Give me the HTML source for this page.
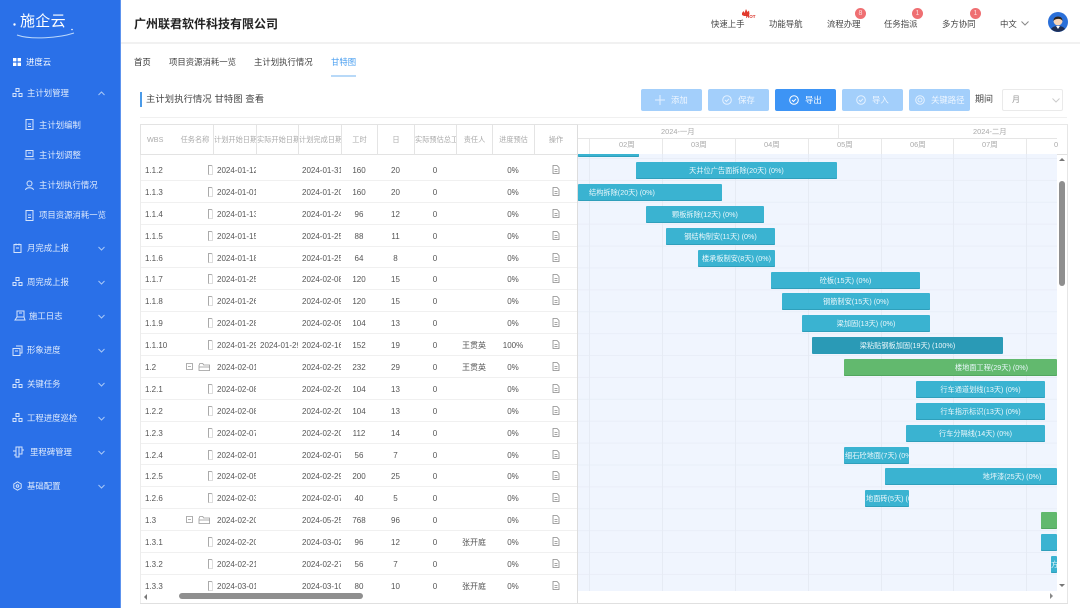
<!DOCTYPE html>
<html lang="zh-CN"><head><meta charset="utf-8"><title>施企云</title>
<style>
*{box-sizing:border-box;margin:0;padding:0}
html,body{width:1080px;height:608px;overflow:hidden;background:#fff}
body{position:relative;font-family:"Liberation Sans","Noto Sans CJK SC",sans-serif;color:#555;filter:blur(.3px)}
.a{position:absolute;white-space:nowrap}
#side{position:absolute;left:0;top:0;width:121px;height:608px;background:#2a70e8;border-right:1px solid #5d93ee}
.m{position:absolute;white-space:nowrap;font-size:8.4px;line-height:12px;color:#e0ebfc;transform:translateY(-6px)}
.ic{position:absolute;fill:none;stroke:#d5e4fb;stroke-width:1}
.ch{position:absolute;left:98px;fill:none;stroke:#a9c8f6;stroke-width:1}
.nav{font-size:8.4px;color:#444;line-height:12px;top:18px}
.bd{position:absolute;width:11px;height:11px;border-radius:50%;background:#ef6f72;top:8px;color:#fbdcdc;font-size:7px;line-height:11px;text-align:center}
.btn{position:absolute;top:89px;height:22px;width:61px;border-radius:2px;background:#a3cffb;color:#eef6ff;font-size:8.4px;line-height:22px;padding-left:30px}
.btn svg{position:absolute;left:14px;top:6px;fill:none;stroke:#e4f1ff;stroke-width:1}
#hd{position:absolute;left:140px;top:124px;width:438px;height:31px;border:1px solid #e3e3e3;border-right:0;background:#fff}
#hd i{position:absolute;top:0;height:30px;border-left:1px solid #e4e4e4}
#hd span{position:absolute;top:10px;font-size:7.2px;line-height:10px;color:#aaa;font-style:normal;white-space:nowrap;overflow:hidden;text-align:center}
#rows{position:absolute;left:140px;top:159px;width:437px;height:432px;overflow:hidden}
.r{display:flex;height:21.9px;line-height:23px;font-size:8px;color:#555;border-bottom:1px solid #f0f0f0;white-space:nowrap}
.r span{display:block;overflow:hidden;flex:none;text-align:center}
.r .w{width:50px;text-align:left;padding-left:5px}
.r .t{width:27px;position:relative;overflow:visible}
.r .d{width:39px;text-align:left}
.r .d2{width:42px;text-align:left;padding-left:4px}
.r .d3{width:43px;text-align:left;padding-left:4px}
.r .h{width:36px}.r .y{width:37px}.r .s{width:42px}.r .p{width:36px}.r .g{width:42px}.r .o{width:43px;position:relative}
.f{position:absolute;left:18px;top:6px;width:5px;height:10px;border:1px solid #aaa;border-right-color:#ddd;border-bottom-color:#ddd;border-top-right-radius:2px}
.e{position:absolute;left:18px;top:6px;fill:none;stroke:#888;stroke-width:.8}
#gw{position:absolute;left:577px;top:124px;width:491px;height:480px;border:1px solid #e6e6e6;border-left:1px solid #ddd;border-top-color:#e8e8e8}
#chart{position:absolute;left:578px;top:154px;width:479px;height:437px;overflow:hidden;background-color:#f0f5fe;background-image:linear-gradient(to bottom,transparent 21px,#e9eef8 21px);background-size:100% 21.9px;background-position:0 5px}
#chart i{position:absolute;top:0;height:437px;border-left:1px solid #e6ebf4}
.b{position:absolute;height:17px;background:#3ab3d1;border-radius:1px;color:#eaf7fb;font-size:7.2px;line-height:17px;text-align:center;overflow:hidden;white-space:nowrap;box-shadow:inset 0 -1px 0 #2f9fbb}
.gn{background:#62b96e;box-shadow:inset 0 -1px 0 #52a65f}
.dk{background:#2a9ab6;box-shadow:none}
.wk{position:absolute;top:140px;font-size:7.4px;color:#aaa;line-height:10px}
.vl{position:absolute;width:1px;background:#e8e8e8}
</style></head><body>
<div id="side">
<svg class="a" style="left:10px;top:10px" width="66" height="30" viewBox="0 0 66 30"><circle cx="4.5" cy="14.5" r="1.2" fill="#fff"/><path d="M7 25c14 5 42 3 57-2" fill="none" stroke="#bcd8fb" stroke-width="1"/><circle cx="62" cy="19.5" r=".8" fill="#fff"/></svg>
<div class="a" style="left:20px;top:12px;font-size:15px;line-height:20px;color:#fff;letter-spacing:.3px">施企云</div>
<svg class="ic" style="left:13px;top:58px;fill:#fff;stroke:none" width="8" height="8"><rect width="3.4" height="3.4"/><rect x="4.6" width="3.4" height="3.4"/><rect y="4.6" width="3.4" height="3.4"/><rect x="4.6" y="4.6" width="3.4" height="3.4"/></svg>
<div class="m" style="left:26px;top:62px;color:#fff">进度云</div>
<svg class="ic" style="left:12px;top:88px" width="11" height="10"><path d="M4 .5h3v3H4zM1 5.5h3v3H1zM7 5.5h3v3H7z"/></svg>
<div class="m" style="left:27px;top:93px">主计划管理</div>
<svg class="ch" style="top:91px" width="7" height="5"><path d="M.5 4 3.5 1l3 3"/></svg>
<svg class="ic" style="left:25px;top:119px" width="9" height="11"><path d="M1 .5h7v10H1zM3 5h3M3 7.500h3"/></svg>
<div class="m" style="left:39px;top:124.500px">主计划编制</div>
<svg class="ic" style="left:24px;top:150px" width="11" height="10"><path d="M2 .5h7v6H2zM.5 9h10M4 3h3"/></svg>
<div class="m" style="left:39px;top:155px">主计划调整</div>
<svg class="ic" style="left:25px;top:180px" width="9" height="11"><circle cx="4.500" cy="3.500" r="2.500"/><path d="M.5 10c.5-3 7.500-3 8 0"/></svg>
<div class="m" style="left:39px;top:185px">主计划执行情况</div>
<svg class="ic" style="left:25px;top:210px" width="9" height="11"><path d="M1 .5h7v10H1zM3 5h3M3 7.500h3"/></svg>
<div class="m" style="left:39px;top:215px">项目资源消耗一览</div>
<svg class="ic" style="left:13px;top:243px" width="9" height="10"><path d="M1 1.500h7v8H1zM3 .5v2M6 .5v2M3 5h3"/></svg>
<div class="m" style="left:27px;top:248px">月完成上报</div>
<svg class="ch" style="top:246px" width="7" height="5"><path d="M.5 1l3 3 3-3"/></svg>
<svg class="ic" style="left:12px;top:277px" width="11" height="10"><path d="M4 .5h3v3H4zM1 5.500h3v3H1zM7 5.500h3v3H7z"/></svg>
<div class="m" style="left:27px;top:282px">周完成上报</div>
<svg class="ch" style="top:280px" width="7" height="5"><path d="M.5 1l3 3 3-3"/></svg>
<svg class="ic" style="left:13px;top:310px" width="13" height="12"><path d="M4 1h7v6H4zM2 10l2-3h7l1 3zM6 3h3"/></svg>
<div class="m" style="left:29px;top:316px">施工日志</div>
<svg class="ch" style="top:314px" width="7" height="5"><path d="M.5 1l3 3 3-3"/></svg>
<svg class="ic" style="left:12px;top:345px" width="11" height="11"><path d="M4 1h6v7H8M1 3.500h7v7H1zM3 6h3"/></svg>
<div class="m" style="left:27px;top:350px">形象进度</div>
<svg class="ch" style="top:348px" width="7" height="5"><path d="M.5 1l3 3 3-3"/></svg>
<svg class="ic" style="left:12px;top:379px" width="11" height="10"><path d="M4 .5h3v3H4zM1 5.500h3v3H1zM7 5.500h3v3H7z"/></svg>
<div class="m" style="left:27px;top:384px">关键任务</div>
<svg class="ch" style="top:382px" width="7" height="5"><path d="M.5 1l3 3 3-3"/></svg>
<svg class="ic" style="left:12px;top:413px" width="11" height="10"><path d="M4 .5h3v3H4zM1 5.500h3v3H1zM7 5.500h3v3H7z"/></svg>
<div class="m" style="left:27px;top:418px">工程进度巡检</div>
<svg class="ch" style="top:416px" width="7" height="5"><path d="M.5 1l3 3 3-3"/></svg>
<svg class="ic" style="left:12px;top:446px" width="13" height="12"><path d="M4 1h3v10H4zM7 1h3v7H7zM1 5h3M10 4h2M2 9h2"/></svg>
<div class="m" style="left:30px;top:452px">里程碑管理</div>
<svg class="ch" style="top:450px" width="7" height="5"><path d="M.5 1l3 3 3-3"/></svg>
<svg class="ic" style="left:13px;top:481px" width="9" height="10"><path d="M4.500.8 8.200 3v4L4.500 9.200.8 7V3z"/><circle cx="4.500" cy="5" r="1.300"/></svg>
<div class="m" style="left:27px;top:486px">基础配置</div>
<svg class="ch" style="top:484px" width="7" height="5"><path d="M.5 1l3 3 3-3"/></svg>
</div>

<div class="a" style="left:121px;top:42px;width:959px;height:2px;background:#f1f1f1"></div>
<div class="a" style="left:134px;top:16px;font-size:12px;line-height:17px;font-weight:bold;color:#222">广州联君软件科技有限公司</div>
<div class="a nav" style="left:711px">快速上手</div>
<svg class="a" style="left:741px;top:8px" width="16" height="11"><path d="M1 5 2.500 3 3.500 5 5 1l1.500 3L8 2.500 8.500 6l-1 2-4.500 0-2-1z" fill="#e23b2e"/><text x="5" y="10" font-size="4.500" font-weight="bold" fill="#d92c22" font-family="Liberation Sans,sans-serif">HOT</text></svg>
<div class="a nav" style="left:769px">功能导航</div>
<div class="a nav" style="left:827px">流程办理</div><div class="bd" style="left:855px">8</div>
<div class="a nav" style="left:884px">任务指派</div><div class="bd" style="left:912px">1</div>
<div class="a nav" style="left:942px">多方协同</div><div class="bd" style="left:970px">1</div>
<div class="a nav" style="left:1000px">中文</div>
<svg class="a" style="left:1021px;top:21px;fill:none;stroke:#888" width="8" height="5"><path d="M.5.5l3.500 3.500L7.500.5"/></svg>
<svg class="a" style="left:1048px;top:12px" width="20" height="20" viewBox="0 0 20 20"><circle cx="10" cy="10" r="10" fill="#2a6fd8"/><path d="M3 17c2-4 12-4 14 0a10 10 0 0 1-14 0z" fill="#1f2f55"/><path d="M8 14l2 3 2-3z" fill="#fff"/><circle cx="10" cy="9" r="4.500" fill="#f8d5b8"/><path d="M5.500 9c-.5-6 9.500-6 9 0-1-2.500-7-3-9 0z" fill="#2a2320"/></svg>

<div class="a" style="left:134px;top:56px;font-size:8.4px;line-height:12px;color:#333">首页</div>
<div class="a" style="left:169px;top:56px;font-size:8.4px;line-height:12px;color:#444">项目资源消耗一览</div>
<div class="a" style="left:254px;top:56px;font-size:8.4px;line-height:12px;color:#444">主计划执行情况</div>
<div class="a" style="left:331px;top:56px;font-size:8.400px;line-height:12px;color:#4a9ff0">甘特图</div>
<div class="a" style="left:331px;top:75px;width:25px;height:2px;background:#b8d9f8"></div>

<div class="a" style="left:140px;top:92px;width:2px;height:15px;background:#4a9ae8"></div>
<div class="a" style="left:146px;top:93px;font-size:9.300px;line-height:13px;color:#444;letter-spacing:.1px">主计划执行情况 甘特图 查看</div>
<div class="a" style="left:140px;top:117px;width:927px;height:1px;background:#f0f0f0"></div>

<div class="btn" style="left:641px"><svg width="10" height="10"><path d="M5 0v10M0 5h10"/></svg>添加</div>
<div class="btn" style="left:708px"><svg width="10" height="10"><circle cx="5" cy="5" r="4.300"/><path d="M3 5l1.500 1.500L7 3.800"/></svg>保存</div>
<div class="btn" style="left:775px;background:#3d94f5;color:#fff"><svg width="10" height="10" style="stroke:#fff"><circle cx="5" cy="5" r="4.300"/><path d="M3 5l1.500 1.500L7 3.800"/></svg>导出</div>
<div class="btn" style="left:842px"><svg width="10" height="10"><circle cx="5" cy="5" r="4.300"/><path d="M3 5l1.500 1.500L7 3.800"/></svg>导入</div>
<div class="btn" style="left:909px;padding-left:22px"><svg width="10" height="10" style="left:6px"><circle cx="5" cy="5" r="4.300"/><circle cx="5" cy="5" r="2"/></svg>关键路径</div>
<div class="a" style="left:975px;top:93px;font-size:9px;line-height:13px;color:#444">期间</div>
<div class="a" style="left:1002px;top:89px;width:61px;height:22px;border:1px solid #eaeaea;border-radius:2px;font-size:8px;line-height:20px;color:#999;padding-left:9px">月</div>
<svg class="a" style="left:1052px;top:98px;fill:none;stroke:#ccc" width="8" height="5"><path d="M.5.5l3.500 3.500L7.500.5"/></svg>

<div id="hd">
<span style="left:6px;width:20px;text-align:left">WBS</span><span style="left:37px;width:34px">任务名称</span>
<i style="left:72px"></i><span style="left:73px;width:42px">计划开始日期</span>
<i style="left:115px"></i><span style="left:116px;width:42px">实际开始日期</span>
<i style="left:157px"></i><span style="left:158px;width:42px">计划完成日期</span>
<i style="left:200px"></i><span style="left:201px;width:35px">工时</span>
<i style="left:236px"></i><span style="left:237px;width:36px">日</span>
<i style="left:273px"></i><span style="left:274px;width:41px">实际预估总工</span>
<i style="left:315px"></i><span style="left:316px;width:35px">责任人</span>
<i style="left:351px"></i><span style="left:352px;width:41px">进度预估</span>
<i style="left:393px"></i><span style="left:394px;width:42px">操作</span>
<i style="left:436px"></i>
</div>

<div id="rows">
<div class="r"><span class="w">1.1.2</span><span class="t"><b class="f"></b></span><span class="d">2024-01-12</span><span class="d2"></span><span class="d3">2024-01-31</span><span class="h">160</span><span class="y">20</span><span class="s">0</span><span class="p"></span><span class="g">0%</span><span class="o"><svg class="e" width="8" height="9"><path d="M1 .5h4l2 2v6H1zM2.500 4.500h3M2.500 6.500h3"/></svg></span></div>
<div class="r"><span class="w">1.1.3</span><span class="t"><b class="f"></b></span><span class="d">2024-01-01</span><span class="d2"></span><span class="d3">2024-01-20</span><span class="h">160</span><span class="y">20</span><span class="s">0</span><span class="p"></span><span class="g">0%</span><span class="o"><svg class="e" width="8" height="9"><path d="M1 .5h4l2 2v6H1zM2.500 4.500h3M2.500 6.500h3"/></svg></span></div>
<div class="r"><span class="w">1.1.4</span><span class="t"><b class="f"></b></span><span class="d">2024-01-13</span><span class="d2"></span><span class="d3">2024-01-24</span><span class="h">96</span><span class="y">12</span><span class="s">0</span><span class="p"></span><span class="g">0%</span><span class="o"><svg class="e" width="8" height="9"><path d="M1 .5h4l2 2v6H1zM2.500 4.500h3M2.500 6.500h3"/></svg></span></div>
<div class="r"><span class="w">1.1.5</span><span class="t"><b class="f"></b></span><span class="d">2024-01-15</span><span class="d2"></span><span class="d3">2024-01-25</span><span class="h">88</span><span class="y">11</span><span class="s">0</span><span class="p"></span><span class="g">0%</span><span class="o"><svg class="e" width="8" height="9"><path d="M1 .5h4l2 2v6H1zM2.500 4.500h3M2.500 6.500h3"/></svg></span></div>
<div class="r"><span class="w">1.1.6</span><span class="t"><b class="f"></b></span><span class="d">2024-01-18</span><span class="d2"></span><span class="d3">2024-01-25</span><span class="h">64</span><span class="y">8</span><span class="s">0</span><span class="p"></span><span class="g">0%</span><span class="o"><svg class="e" width="8" height="9"><path d="M1 .5h4l2 2v6H1zM2.500 4.500h3M2.500 6.500h3"/></svg></span></div>
<div class="r"><span class="w">1.1.7</span><span class="t"><b class="f"></b></span><span class="d">2024-01-25</span><span class="d2"></span><span class="d3">2024-02-08</span><span class="h">120</span><span class="y">15</span><span class="s">0</span><span class="p"></span><span class="g">0%</span><span class="o"><svg class="e" width="8" height="9"><path d="M1 .5h4l2 2v6H1zM2.500 4.500h3M2.500 6.500h3"/></svg></span></div>
<div class="r"><span class="w">1.1.8</span><span class="t"><b class="f"></b></span><span class="d">2024-01-26</span><span class="d2"></span><span class="d3">2024-02-09</span><span class="h">120</span><span class="y">15</span><span class="s">0</span><span class="p"></span><span class="g">0%</span><span class="o"><svg class="e" width="8" height="9"><path d="M1 .5h4l2 2v6H1zM2.500 4.500h3M2.500 6.500h3"/></svg></span></div>
<div class="r"><span class="w">1.1.9</span><span class="t"><b class="f"></b></span><span class="d">2024-01-28</span><span class="d2"></span><span class="d3">2024-02-09</span><span class="h">104</span><span class="y">13</span><span class="s">0</span><span class="p"></span><span class="g">0%</span><span class="o"><svg class="e" width="8" height="9"><path d="M1 .5h4l2 2v6H1zM2.500 4.500h3M2.500 6.500h3"/></svg></span></div>
<div class="r"><span class="w">1.1.10</span><span class="t"><b class="f"></b></span><span class="d">2024-01-29</span><span class="d2">2024-01-29</span><span class="d3">2024-02-16</span><span class="h">152</span><span class="y">19</span><span class="s">0</span><span class="p">王贯英</span><span class="g">100%</span><span class="o"><svg class="e" width="8" height="9"><path d="M1 .5h4l2 2v6H1zM2.500 4.500h3M2.500 6.500h3"/></svg></span></div>
<div class="r"><span class="w">1.2</span><span class="t"><svg class="a" style="left:-4px;top:6px;fill:none;stroke:#999;stroke-width:.8" width="25" height="10"><path d="M.5 1.500h6v6h-6zM2 4.500h3M13 3.500l.8-2h3l.8 1.500h6v5.500H13z"/><path d="M13 5h11"/></svg></span><span class="d">2024-02-01</span><span class="d2"></span><span class="d3">2024-02-29</span><span class="h">232</span><span class="y">29</span><span class="s">0</span><span class="p">王贯英</span><span class="g">0%</span><span class="o"><svg class="e" width="8" height="9"><path d="M1 .5h4l2 2v6H1zM2.500 4.500h3M2.500 6.500h3"/></svg></span></div>
<div class="r"><span class="w">1.2.1</span><span class="t"><b class="f"></b></span><span class="d">2024-02-08</span><span class="d2"></span><span class="d3">2024-02-20</span><span class="h">104</span><span class="y">13</span><span class="s">0</span><span class="p"></span><span class="g">0%</span><span class="o"><svg class="e" width="8" height="9"><path d="M1 .5h4l2 2v6H1zM2.500 4.500h3M2.500 6.500h3"/></svg></span></div>
<div class="r"><span class="w">1.2.2</span><span class="t"><b class="f"></b></span><span class="d">2024-02-08</span><span class="d2"></span><span class="d3">2024-02-20</span><span class="h">104</span><span class="y">13</span><span class="s">0</span><span class="p"></span><span class="g">0%</span><span class="o"><svg class="e" width="8" height="9"><path d="M1 .5h4l2 2v6H1zM2.500 4.500h3M2.500 6.500h3"/></svg></span></div>
<div class="r"><span class="w">1.2.3</span><span class="t"><b class="f"></b></span><span class="d">2024-02-07</span><span class="d2"></span><span class="d3">2024-02-20</span><span class="h">112</span><span class="y">14</span><span class="s">0</span><span class="p"></span><span class="g">0%</span><span class="o"><svg class="e" width="8" height="9"><path d="M1 .5h4l2 2v6H1zM2.500 4.500h3M2.500 6.500h3"/></svg></span></div>
<div class="r"><span class="w">1.2.4</span><span class="t"><b class="f"></b></span><span class="d">2024-02-01</span><span class="d2"></span><span class="d3">2024-02-07</span><span class="h">56</span><span class="y">7</span><span class="s">0</span><span class="p"></span><span class="g">0%</span><span class="o"><svg class="e" width="8" height="9"><path d="M1 .5h4l2 2v6H1zM2.500 4.500h3M2.500 6.500h3"/></svg></span></div>
<div class="r"><span class="w">1.2.5</span><span class="t"><b class="f"></b></span><span class="d">2024-02-05</span><span class="d2"></span><span class="d3">2024-02-29</span><span class="h">200</span><span class="y">25</span><span class="s">0</span><span class="p"></span><span class="g">0%</span><span class="o"><svg class="e" width="8" height="9"><path d="M1 .5h4l2 2v6H1zM2.500 4.500h3M2.500 6.500h3"/></svg></span></div>
<div class="r"><span class="w">1.2.6</span><span class="t"><b class="f"></b></span><span class="d">2024-02-03</span><span class="d2"></span><span class="d3">2024-02-07</span><span class="h">40</span><span class="y">5</span><span class="s">0</span><span class="p"></span><span class="g">0%</span><span class="o"><svg class="e" width="8" height="9"><path d="M1 .5h4l2 2v6H1zM2.500 4.500h3M2.500 6.500h3"/></svg></span></div>
<div class="r"><span class="w">1.3</span><span class="t"><svg class="a" style="left:-4px;top:6px;fill:none;stroke:#999;stroke-width:.8" width="25" height="10"><path d="M.5 1.500h6v6h-6zM2 4.500h3M13 3.500l.8-2h3l.8 1.500h6v5.500H13z"/><path d="M13 5h11"/></svg></span><span class="d">2024-02-20</span><span class="d2"></span><span class="d3">2024-05-25</span><span class="h">768</span><span class="y">96</span><span class="s">0</span><span class="p"></span><span class="g">0%</span><span class="o"><svg class="e" width="8" height="9"><path d="M1 .5h4l2 2v6H1zM2.500 4.500h3M2.500 6.500h3"/></svg></span></div>
<div class="r"><span class="w">1.3.1</span><span class="t"><b class="f"></b></span><span class="d">2024-02-20</span><span class="d2"></span><span class="d3">2024-03-02</span><span class="h">96</span><span class="y">12</span><span class="s">0</span><span class="p">张开庭</span><span class="g">0%</span><span class="o"><svg class="e" width="8" height="9"><path d="M1 .5h4l2 2v6H1zM2.500 4.500h3M2.500 6.500h3"/></svg></span></div>
<div class="r"><span class="w">1.3.2</span><span class="t"><b class="f"></b></span><span class="d">2024-02-21</span><span class="d2"></span><span class="d3">2024-02-27</span><span class="h">56</span><span class="y">7</span><span class="s">0</span><span class="p"></span><span class="g">0%</span><span class="o"><svg class="e" width="8" height="9"><path d="M1 .5h4l2 2v6H1zM2.500 4.500h3M2.500 6.500h3"/></svg></span></div>
<div class="r"><span class="w">1.3.3</span><span class="t"><b class="f"></b></span><span class="d">2024-03-01</span><span class="d2"></span><span class="d3">2024-03-10</span><span class="h">80</span><span class="y">10</span><span class="s">0</span><span class="p">张开庭</span><span class="g">0%</span><span class="o"><svg class="e" width="8" height="9"><path d="M1 .5h4l2 2v6H1zM2.500 4.500h3M2.500 6.500h3"/></svg></span></div>
</div>

<div id="gw"></div>
<div class="a" style="left:578px;top:138px;width:479px;height:1px;background:#e5e5e5"></div>
<div class="a" style="left:578px;top:154px;width:489px;height:1px;background:#e0e0e0"></div>
<div class="vl" style="left:838px;top:124px;height:14px"></div>
<div class="vl" style="left:589px;top:139px;height:15px"></div><div class="vl" style="left:662px;top:139px;height:15px"></div><div class="vl" style="left:735px;top:139px;height:15px"></div><div class="vl" style="left:808px;top:139px;height:15px"></div><div class="vl" style="left:881px;top:139px;height:15px"></div><div class="vl" style="left:953px;top:139px;height:15px"></div><div class="vl" style="left:1026px;top:139px;height:15px"></div>
<div class="a" style="left:661px;top:127px;font-size:7.400px;line-height:10px;color:#aaa">2024-一月</div>
<div class="a" style="left:973px;top:127px;font-size:7.400px;line-height:10px;color:#aaa">2024-二月</div>
<div class="wk" style="left:619px">02周</div><div class="wk" style="left:691px">03周</div><div class="wk" style="left:764px">04周</div><div class="wk" style="left:837px">05周</div><div class="wk" style="left:910px">06周</div><div class="wk" style="left:982px">07周</div><div class="wk" style="left:1054px">0</div>

<div id="chart">
<i style="left:11px"></i><i style="left:84px"></i><i style="left:157px"></i><i style="left:230px"></i><i style="left:303px"></i><i style="left:375px"></i><i style="left:448px"></i>
<div class="b" style="left:0;top:-14px;width:61px">&nbsp;</div>
<div class="b" style="left:58px;top:8px;width:201px">天井位广告面拆除(20天) (0%)</div>
<div class="b" style="left:0;top:30px;width:144px;padding-right:56px">结构拆除(20天) (0%)</div>
<div class="b" style="left:68px;top:52px;width:118px">颗板拆除(12天) (0%)</div>
<div class="b" style="left:88px;top:74px;width:109px">钢结构制安(11天) (0%)</div>
<div class="b" style="left:120px;top:96px;width:77px">楼承板制安(8天) (0%)</div>
<div class="b" style="left:193px;top:118px;width:149px">砼板(15天) (0%)</div>
<div class="b" style="left:204px;top:139px;width:148px">钢筋制安(15天) (0%)</div>
<div class="b" style="left:224px;top:161px;width:128px">梁加固(13天) (0%)</div>
<div class="b dk" style="left:234px;top:183px;width:191px">梁粘贴钢板加固(19天) (100%)</div>
<div class="b gn" style="left:266px;top:205px;width:213px;padding-left:82px">楼地面工程(29天) (0%)</div>
<div class="b" style="left:338px;top:227px;width:129px">行车通道划线(13天) (0%)</div>
<div class="b" style="left:338px;top:249px;width:129px">行车指示标识(13天) (0%)</div>
<div class="b" style="left:328px;top:271px;width:139px">行车分隔线(14天) (0%)</div>
<div class="b" style="left:266px;top:293px;width:65px;text-align:left;padding-left:1px">细石砼地面(7天) (0%)</div>
<div class="b" style="left:307px;top:314px;width:172px;padding-left:82px">地坪漆(25天) (0%)</div>
<div class="b" style="left:287px;top:336px;width:44px;text-align:left;padding-left:1px">地面砖(5天) (0%)</div>
<div class="b gn" style="left:463px;top:358px;width:16px"></div>
<div class="b" style="left:463px;top:380px;width:16px"></div>
<div class="b" style="left:473px;top:402px;width:6px;text-align:left">方</div>
</div>

<div class="a" style="left:140px;top:603px;width:928px;height:1px;background:#e0e0e0"></div>
<div class="a" style="left:140px;top:155px;width:1px;height:448px;background:#ececec"></div>
<div class="a" style="left:179px;top:593px;width:184px;height:6px;border-radius:3px;background:#8f8f8f"></div>
<div class="a" style="left:1059px;top:181px;width:6px;height:105px;border-radius:3px;background:#8f8f8f"></div>
<div class="a" style="left:1059px;top:158px;width:0;height:0;border:3px solid transparent;border-top:0;border-bottom:3px solid #777"></div>
<div class="a" style="left:1059px;top:584px;width:0;height:0;border:3px solid transparent;border-bottom:0;border-top:3px solid #777"></div>
<div class="a" style="left:144px;top:594px;width:0;height:0;border:3px solid transparent;border-left:0;border-right:3px solid #777"></div>
<div class="a" style="left:1050px;top:593px;width:0;height:0;border:3px solid transparent;border-right:0;border-left:3px solid #888"></div>
</body></html>
